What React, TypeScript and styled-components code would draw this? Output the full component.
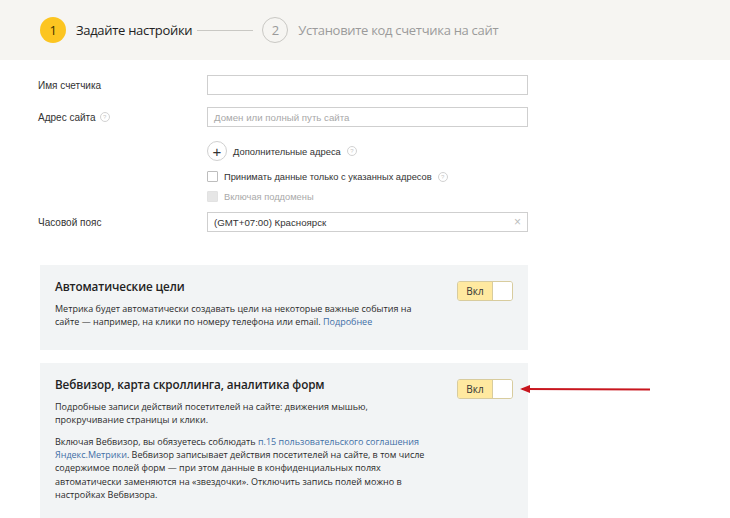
import React from "react";
import styled, { createGlobalStyle } from "styled-components";

const GlobalStyle = createGlobalStyle`
  html, body {
    margin: 0;
    padding: 0;
    background: #ffffff;
  }
  body {
    font-family: "Liberation Sans", Arial, sans-serif;
    color: #222;
  }
`;

const Page = styled.div`
  position: relative;
  width: 730px;
  height: 518px;
  overflow: hidden;
  background: #fff;
`;

const Steps = styled.div`
  height: 60px;
  background: #f6f5f2;
  display: flex;
  align-items: center;
  padding-left: 40px;
  font-family: "Open Sans", "Noto Sans", sans-serif;
  font-size: 13px;
  letter-spacing: -0.3px;
`;

const StepNum = styled.span<{ $active?: boolean }>`
  width: 26px;
  height: 26px;
  border-radius: 50%;
  box-sizing: border-box;
  display: flex;
  align-items: center;
  justify-content: center;
  font-size: 13px;
  background: ${(p) => (p.$active ? "#fcc521" : "transparent")};
  border: ${(p) => (p.$active ? "none" : "1px solid #c9c8c4")};
  color: ${(p) => (p.$active ? "#3a3000" : "#9a9a9a")};
`;

const StepLabel = styled.span<{ $active?: boolean }>`
  margin-left: 10px;
  color: ${(p) => (p.$active ? "#222" : "#9b9b9b")};
`;

const StepLine = styled.span`
  width: 56px;
  height: 1px;
  background: #c9c8c4;
  margin: 0 9px 0 5px;
`;

const Form = styled.div`
  display: grid;
  grid-template-columns: 169px 321px;
  padding: 15px 0 0 38px;
  align-items: center;
`;

const Label = styled.div`
  color: #333;
  display: flex;
  align-items: center;
  gap: 4px;
  font-size: 10px;
`;

const Input = styled.div<{ $placeholder?: boolean }>`
  height: 20px;
  box-sizing: border-box;
  border: 1px solid #cfcfcf;
  display: flex;
  align-items: center;
  padding: 0 6px;
  color: ${(p) => (p.$placeholder ? "#a8a8a8" : "#333")};
  font-size: 9.7px;
  justify-content: space-between;
`;

const Spacer = styled.div<{ $h: number }>`
  grid-column: 1 / -1;
  height: ${(p) => p.$h}px;
`;

const Help = styled.span`
  width: 8px;
  height: 8px;
  border-radius: 50%;
  border: 1px solid #d2d2d2;
  color: #c8c8c8;
  font-size: 6px;
  display: inline-flex;
  align-items: center;
  justify-content: center;
`;

const AddRow = styled.div`
  display: flex;
  align-items: center;
  gap: 6px;
  color: #333;
  font-size: 9.4px;
`;

const PlusBtn = styled.span`
  width: 20px;
  height: 20px;
  border-radius: 50%;
  box-sizing: border-box;
  border: 1px solid #d0d0d0;
  display: flex;
  align-items: center;
  justify-content: center;
  font-size: 15px;
  color: #333;
  line-height: 1;
`;

const CheckRow = styled.div<{ $disabled?: boolean }>`
  display: flex;
  align-items: center;
  gap: 6px;
  font-size: 9.3px;
  color: ${(p) => (p.$disabled ? "#a9a9a9" : "#333")};
`;

const Box = styled.span<{ $disabled?: boolean }>`
  width: 11px;
  height: 11px;
  box-sizing: border-box;
  border: 1px solid ${(p) => (p.$disabled ? "#e2e2e2" : "#bdbdbd")};
  background: ${(p) => (p.$disabled ? "#e6e6e6" : "#fff")};
  border-radius: 1px;
`;

const Clear = styled.span`
  color: #bdbdbd;
  font-size: 12px;
`;

const Cards = styled.div`
  display: flex;
  flex-direction: column;
  gap: 13px;
  padding: 33px 0 0 40px;
  width: 488px;
`;

const Card = styled.div`
  background: #f2f4f5;
  display: flex;
  justify-content: space-between;
  align-items: flex-start;
  padding: 13px 15px 21px 15px;
  font-family: "Open Sans", "Noto Sans", sans-serif;
`;

const CardBody = styled.div`
  width: 390px;
`;

const CardTitle = styled.div`
  font-size: 11.7px;
  font-weight: 600;
  line-height: 17px;
  color: #222;
  margin-bottom: 7px;
  letter-spacing: -0.1px;
`;

const CardText = styled.p`
  margin: 0 0 8px 0;
  font-size: 9px;
  line-height: 13.4px;
  color: #2b2b2b;
  white-space: nowrap;
  &:last-child {
    margin-bottom: 0;
  }
`;

const Link = styled.a`
  color: #3f6fa6;
  text-decoration: none;
`;

const Toggle = styled.div`
  margin-top: 3px;
  display: flex;
  height: 20px;
  box-sizing: border-box;
  border: 1px solid #d8cc9e;
  border-radius: 3px;
  overflow: hidden;
  font-size: 10px;
  color: #333;
`;

const ToggleOn = styled.span`
  width: 34px;
  background: #ffe9a0;
  display: flex;
  align-items: center;
  justify-content: center;
  border-right: 1px solid #d8cc9e;
`;

const ToggleKnob = styled.span`
  width: 19px;
  background: #fff;
`;

const Arrow = styled.svg`
  position: absolute;
  left: 518px;
  top: 382px;
`;

export default function App() {
  return (
    <Page>
      <GlobalStyle />
      <Steps>
        <StepNum $active>1</StepNum>
        <StepLabel $active>Задайте настройки</StepLabel>
        <StepLine />
        <StepNum>2</StepNum>
        <StepLabel>Установите код счетчика на сайт</StepLabel>
      </Steps>

      <Form>
        <Label>Имя счетчика</Label>
        <Input />
        <Spacer $h={12} />
        <Label>
          Адрес сайта <Help>?</Help>
        </Label>
        <Input $placeholder>Домен или полный путь сайта</Input>
        <Spacer $h={14} />
        <div />
        <AddRow>
          <PlusBtn>+</PlusBtn>
          Дополнительные адреса <Help>?</Help>
        </AddRow>
        <Spacer $h={10} />
        <div />
        <CheckRow>
          <Box />
          Принимать данные только с указанных адресов <Help>?</Help>
        </CheckRow>
        <Spacer $h={9} />
        <div />
        <CheckRow $disabled>
          <Box $disabled />
          Включая поддомены
        </CheckRow>
        <Spacer $h={10} />
        <Label>Часовой пояс</Label>
        <Input>
          (GMT+07:00) Красноярск
          <Clear>×</Clear>
        </Input>
      </Form>

      <Cards>
        <Card>
          <CardBody>
            <CardTitle>Автоматические цели</CardTitle>
            <CardText>
              Метрика будет автоматически создавать цели на некоторые важные события на
              <br />
              сайте — например, на клики по номеру телефона или email.{" "}
              <Link>Подробнее</Link>
            </CardText>
          </CardBody>
          <Toggle>
            <ToggleOn>Вкл</ToggleOn>
            <ToggleKnob />
          </Toggle>
        </Card>
        <Card>
          <CardBody>
            <CardTitle>Вебвизор, карта скроллинга, аналитика форм</CardTitle>
            <CardText>
              Подробные записи действий посетителей на сайте: движения мышью,
              <br />
              прокручивание страницы и клики.
            </CardText>
            <CardText>
              Включая Вебвизор, вы обязуетесь соблюдать{" "}
              <Link>
                п.15 пользовательского соглашения
                <br />
                Яндекс.Метрики
              </Link>
              . Вебвизор записывает действия посетителей на сайте, в том числе
              <br />
              содержимое полей форм — при этом данные в конфиденциальных полях
              <br />
              автоматически заменяются на «звездочки». Отключить запись полей можно в
              <br />
              настройках Вебвизора.
            </CardText>
          </CardBody>
          <Toggle>
            <ToggleOn>Вкл</ToggleOn>
            <ToggleKnob />
          </Toggle>
        </Card>
      </Cards>

      <Arrow width="136" height="14" viewBox="0 0 136 14">
        <path d="M4 7 L132 7.5" stroke="#c8161e" strokeWidth="2" fill="none" />
        <path d="M2 7 L12 3 L12 11 Z" fill="#c8161e" />
      </Arrow>
    </Page>
  );
}
